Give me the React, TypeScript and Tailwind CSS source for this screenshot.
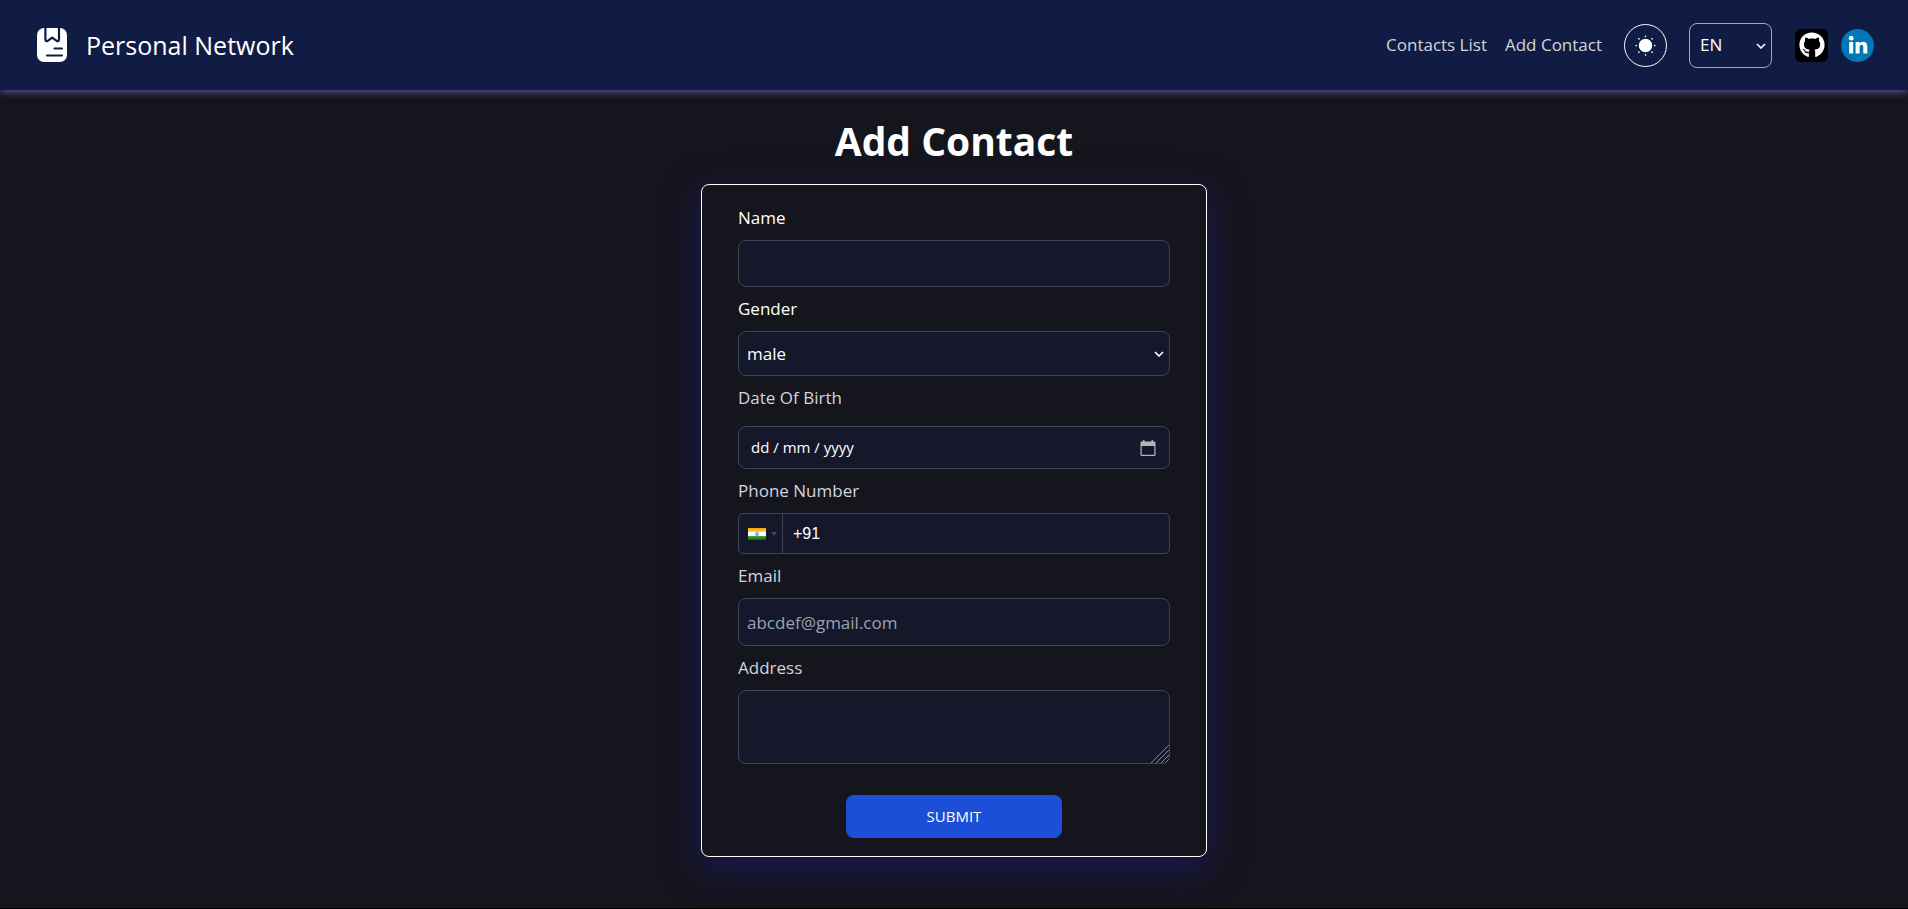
import { useState, type ReactNode } from "react";
import { BsBrightnessLowFill } from "react-icons/bs";
import { FaGithub } from "react-icons/fa";

const control =
  "w-full rounded-lg border border-[#3e4656] bg-[#15182a] px-2 text-[17px] text-white outline-none placeholder:text-[#9ca3af]";

function LogoIcon() {
  return (
    <svg viewBox="0 0 30 34" className="h-[34px] w-[30px]" aria-hidden="true">
      <rect width="30" height="34" rx="7" fill="#fff" />
      <g fill="none" stroke="#111c44" strokeWidth="2.2" strokeLinecap="round" strokeLinejoin="round">
        <path d="M8.400 -1V11.500Q8.700 13.800 10.700 12.900L15.200 9.600L19.700 12.900Q21.700 13.800 22 11.500V-1" />
        <path d="M17.500 20.500H25M10 27.500H25" />
      </g>
    </svg>
  );
}

function LinkedInMark() {
  return (
    <svg viewBox="0 0 33 33" className="size-[33px]" fill="#fff" aria-hidden="true">
      <circle cx="10.200" cy="9.200" r="2.400" />
      <rect x="8.200" y="13" width="4" height="11.500" />
      <path d="M14.600 13h3.900v1.600c.8-1.200 2-1.900 3.600-1.900 2.900 0 4.200 1.800 4.200 4.900v6.900h-4v-6.300c0-1.500-.5-2.400-1.700-2.400s-2 .9-2 2.500v6.200h-4z" />
    </svg>
  );
}

function Chevron({ className }: { className: string }) {
  return (
    <svg viewBox="0 0 10 6" className={`pointer-events-none absolute h-[6px] w-[10px] ${className}`} aria-hidden="true">
      <path d="M1 1l4 4 4-4" fill="none" stroke="#fff" strokeWidth="1.600" />
    </svg>
  );
}

function CalendarIcon() {
  return (
    <svg viewBox="0 0 16 16" className="size-4" aria-hidden="true">
      <path
        fill="#b4b3b8"
        fillRule="evenodd"
        d="M3 0h1.500v1.500h7V0H13v1.500h1.500a1 1 0 0 1 1 1V15a1 1 0 0 1-1 1h-13a1 1 0 0 1-1-1V2.500a1 1 0 0 1 1-1H3zM1.700 6v8.800h12.600V6z"
      />
    </svg>
  );
}

function IndiaFlag() {
  return (
    <svg viewBox="0 0 18 12" className="h-3 w-[18px]" aria-hidden="true">
      <defs>
        <linearGradient id="saffron" x1="0" y1="0" x2="0" y2="1">
          <stop offset="0" stopColor="#f0a000" />
          <stop offset="1" stopColor="#ffd060" />
        </linearGradient>
        <linearGradient id="green" x1="0" y1="0" x2="0" y2="1">
          <stop offset="0" stopColor="#4aa845" />
          <stop offset="1" stopColor="#0a6410" />
        </linearGradient>
      </defs>
      <rect width="18" height="4" fill="url(#saffron)" />
      <rect y="4" width="18" height="4" fill="#fff" />
      <rect y="8" width="18" height="4" fill="url(#green)" />
      <circle cx="9" cy="6" r="1.600" fill="#b5c3e6" stroke="#6f8bc8" strokeWidth="0.800" />
    </svg>
  );
}

function Field({
  id,
  label,
  bright,
  children,
}: {
  id: string;
  label: string;
  bright?: boolean;
  children: ReactNode;
}) {
  return (
    <div className="flex flex-col gap-2">
      <label htmlFor={id} className={`text-[17px] leading-7 ${bright ? "text-white" : "text-[#d1d5db]"}`}>
        {label}
      </label>
      {children}
    </div>
  );
}

export default function App() {
  const [phone, setPhone] = useState("+91");

  return (
    <div className="min-h-screen bg-black font-['Open_Sans','Noto_Sans',sans-serif] text-white">
      <div className="min-h-[calc(100vh-1px)] bg-[#15151e] pb-[50px]">
        <header className="flex h-[90px] items-center justify-between bg-[#111c44] pr-[34px] pl-[37px] shadow-[0_2px_8px_#5b4f96]">
          <a href="#home" className="flex items-center gap-[19px]">
            <LogoIcon />
            <span className="text-[25px] leading-8">Personal Network</span>
          </a>
          <nav className="flex items-center text-[17px] text-[#d1d5db]">
            <a href="#contacts">Contacts List</a>
            <a href="#add" className="ml-[18px]">
              Add Contact
            </a>
            <button
              type="button"
              aria-label="Toggle theme"
              className="ml-[22px] flex size-[43px] items-center justify-center rounded-full border border-white text-white"
            >
              <BsBrightnessLowFill className="size-[27px]" />
            </button>
            <div className="relative ml-[22px]">
              <select
                aria-label="Language"
                defaultValue="EN"
                className="h-[45px] w-[83px] appearance-none rounded-lg border border-[#a3a8b8] bg-[#111c44] px-[10px] text-white"
              >
                <option>EN</option>
                <option>HI</option>
              </select>
              <Chevron className="top-5 right-[6px]" />
            </div>
            <a
              href="#github"
              aria-label="GitHub"
              className="ml-[23px] flex size-[33px] items-center justify-center rounded-md bg-black text-white"
            >
              <FaGithub className="size-[26px]" />
            </a>
            <a href="#linkedin" aria-label="LinkedIn" className="ml-[13px] rounded-full bg-[#0077b7]">
              <LinkedInMark />
            </a>
          </nav>
        </header>

        <main className="flex flex-col items-center pt-6">
          <h1 className="text-[39px] leading-[54px] font-bold">Add Contact</h1>
          <form
            onSubmit={(event) => event.preventDefault()}
            className="mt-4 flex w-full max-w-[506px] flex-col gap-2 rounded-lg border border-white bg-[#15151e] px-9 pt-[19px] pb-[18px] shadow-[0_10px_36px_#1c1856]"
          >
            <Field id="name" label="Name" bright>
              <input id="name" type="text" className={`h-[47px] ${control}`} />
            </Field>
            <Field id="gender" label="Gender" bright>
              <div className="relative flex">
                <select id="gender" defaultValue="male" className={`h-[45px] appearance-none ${control}`}>
                  <option>male</option>
                  <option>female</option>
                  <option>other</option>
                </select>
                <Chevron className="top-5 right-[6px]" />
              </div>
            </Field>
            <Field id="dob" label="Date Of Birth">
              <div className={`mt-[6px] flex h-[43px] items-center ${control}`}>
                <input
                  id="dob"
                  type="text"
                  placeholder="dd / mm / yyyy"
                  className="min-w-0 flex-1 pl-1 text-[15px] outline-none placeholder:text-white"
                />
                <button type="button" aria-label="Open calendar" className="mr-[5px]">
                  <CalendarIcon />
                </button>
              </div>
            </Field>
            <Field id="phone" label="Phone Number">
              <div className="flex h-[41px] rounded-[5px] border border-[#3e4656] bg-[#15182a]">
                <button
                  type="button"
                  aria-label="Country: India"
                  className="flex w-11 items-center gap-[5px] border-r border-[#3e4656] pl-[9px]"
                >
                  <IndiaFlag />
                  <svg viewBox="0 0 6 4" className="h-1 w-[6px]" aria-hidden="true">
                    <path d="M0 0h6L3 4z" fill="#4b4b50" />
                  </svg>
                </button>
                <input
                  id="phone"
                  type="tel"
                  value={phone}
                  onChange={(event) => setPhone(event.target.value)}
                  className="min-w-0 flex-1 px-[10px] font-['Liberation_Sans',sans-serif] text-[16px] outline-none"
                />
              </div>
            </Field>
            <Field id="email" label="Email">
              <input id="email" type="email" placeholder="abcdef@gmail.com" className={`h-[48px] ${control}`} />
            </Field>
            <Field id="address" label="Address">
              <div className="relative flex">
                <textarea id="address" className={`h-[74px] resize-none py-2 ${control}`} />
                <svg
                  viewBox="0 0 18 18"
                  className="pointer-events-none absolute right-px bottom-px size-[18px]"
                  aria-hidden="true"
                >
                  <path
                    d="M0 18L18 0M5 18L18 5M10 18L18 10M14.500 17.500L17.500 14.500"
                    fill="none"
                    stroke="#85858c"
                    strokeWidth="1"
                  />
                </svg>
              </div>
            </Field>
            <button
              type="submit"
              className="mt-[23px] h-[43px] w-1/2 self-center rounded-lg bg-[#1d4ed8] text-[15px] text-white"
            >
              SUBMIT
            </button>
          </form>
        </main>
      </div>
    </div>
  );
}
